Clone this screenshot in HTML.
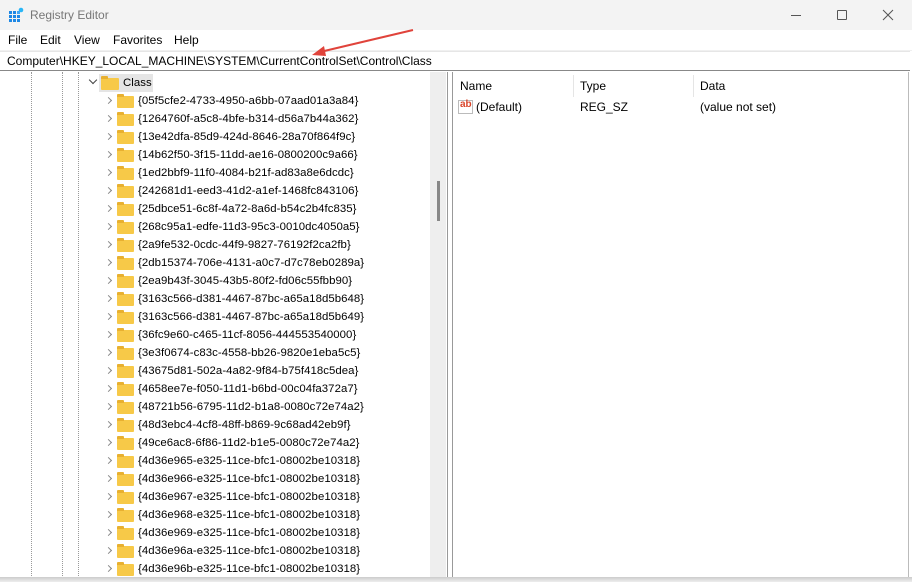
<!DOCTYPE html>
<html><head><meta charset="utf-8"><style>
*{margin:0;padding:0;box-sizing:border-box}
body{width:912px;height:582px;overflow:hidden;background:#fff;font-family:"Segoe UI","Liberation Sans",sans-serif;font-size:12px;color:#000;position:relative}
.abs{position:absolute}
.title{left:0;top:0;width:912px;height:30px;background:#f3f3f3}
.menu{left:0;top:30px;width:912px;height:20px;background:#fff}
.menu span{position:absolute;top:3px;font-size:12px}
.addr{left:0;top:51px;width:910px;height:20px;background:#fff;border-top:1px solid #e6e6e6;border-bottom:1px solid #888}
.tree{left:0;top:72px;width:430px;height:510px;background:#fff}
.row{position:absolute;height:18px;line-height:18px;left:0;width:430px}
.row .t{position:absolute;left:138px;top:0;font-size:11.4px;letter-spacing:0.05px}
.fold{position:absolute;left:117px;top:4px;width:17px;height:12px;background:#f7c948;border-radius:1px}
.fold:before{content:"";position:absolute;left:0;top:-2px;width:7px;height:3px;background:#e8b030;border-radius:1px 1px 0 0}
.chev{position:absolute;left:106px;top:6px;width:5px;height:5px;border-right:1.2px solid #888;border-top:1.2px solid #888;transform:rotate(45deg)}
.dot{position:absolute;top:72px;height:510px;width:0;border-left:1px dotted #999}
</style></head><body>
<div class="abs title">
<svg class="abs" style="left:8px;top:7px" width="16" height="16" viewBox="0 0 16 16">
<g fill="#1e88e5"><rect x="1" y="4" width="3" height="3"/><rect x="5" y="4" width="3" height="3"/><rect x="1" y="8" width="3" height="3"/><rect x="5" y="8" width="3" height="3"/><rect x="9" y="8" width="3" height="3"/><rect x="1" y="12" width="3" height="3"/><rect x="5" y="12" width="3" height="3"/><rect x="9" y="12" width="3" height="3"/><rect x="9" y="4" width="3" height="3" fill="#42a5f5"/></g>
<circle cx="13" cy="3" r="2.3" fill="#29b6f6"/></svg>
<span class="abs" style="left:30px;top:8px;color:#777;font-size:12px">Registry Editor</span>
<div class="abs" style="left:791px;top:15px;width:10px;height:1px;background:#555"></div>
<div class="abs" style="left:837px;top:10px;width:10px;height:10px;border:1px solid #555;border-radius:1px"></div>
<svg class="abs" style="left:882px;top:9px" width="12" height="12"><path d="M1 1L11 11M11 1L1 11" stroke="#555" stroke-width="1"/></svg>
</div>
<div class="abs menu"><span style="left:8px">File</span><span style="left:40px">Edit</span><span style="left:74px">View</span><span style="left:113px">Favorites</span><span style="left:174px">Help</span></div>
<div class="abs" style="left:0;top:50px;width:912px;height:1px;background:#f0f0f0"></div>
<div class="abs addr"><span class="abs" style="left:7px;top:2px;font-size:12px">Computer\HKEY_LOCAL_MACHINE\SYSTEM\CurrentControlSet\Control\Class</span></div>
<div class="abs tree"></div>
<div class="dot" style="left:31px"></div><div class="dot" style="left:62px"></div><div class="dot" style="left:78px"></div>
<div class="abs" style="left:430px;top:72px;width:16px;height:510px;background:#eeeeee"></div>
<div class="abs" style="left:437px;top:181px;width:3px;height:40px;background:#888"></div>
<div class="abs" style="left:447px;top:72px;width:1px;height:510px;background:#999"></div>
<div class="abs" style="left:452px;top:72px;width:1px;height:510px;background:#999"></div>
<div class="abs" style="left:908px;top:72px;width:1px;height:510px;background:#bbb"></div>
<div class="abs" style="left:0;top:577px;width:912px;height:5px;background:linear-gradient(#ccc,#eee)"></div>
<div id="rows"></div>
<div class="abs" style="left:453px;top:75px;width:455px;height:22px">
<span class="abs" style="left:7px;top:4px">Name</span>
<div class="abs" style="left:120px;top:0;width:1px;height:22px;background:#e5e5e5"></div>
<span class="abs" style="left:127px;top:4px">Type</span>
<div class="abs" style="left:240px;top:0;width:1px;height:22px;background:#e5e5e5"></div>
<span class="abs" style="left:247px;top:4px">Data</span>
</div>
<div class="abs" style="left:458px;top:100px;width:15px;height:14px;border:1px solid #bbb;background:#fff"><span class="abs" style="left:1px;top:-2px;color:#d9452b;font-weight:bold;font-size:10px">ab</span></div>
<span class="abs" style="left:476px;top:100px">(Default)</span>
<span class="abs" style="left:580px;top:100px">REG_SZ</span>
<span class="abs" style="left:700px;top:100px">(value not set)</span>
<svg class="abs" style="left:300px;top:25px" width="120" height="40"><path d="M113 5L20 27" stroke="#e0433b" stroke-width="2"/><path d="M12 30L24 21L26 31Z" fill="#e0433b"/></svg>
<script>
var ids=["{05f5cfe2-4733-4950-a6bb-07aad01a3a84}","{1264760f-a5c8-4bfe-b314-d56a7b44a362}","{13e42dfa-85d9-424d-8646-28a70f864f9c}","{14b62f50-3f15-11dd-ae16-0800200c9a66}","{1ed2bbf9-11f0-4084-b21f-ad83a8e6dcdc}","{242681d1-eed3-41d2-a1ef-1468fc843106}","{25dbce51-6c8f-4a72-8a6d-b54c2b4fc835}","{268c95a1-edfe-11d3-95c3-0010dc4050a5}","{2a9fe532-0cdc-44f9-9827-76192f2ca2fb}","{2db15374-706e-4131-a0c7-d7c78eb0289a}","{2ea9b43f-3045-43b5-80f2-fd06c55fbb90}","{3163c566-d381-4467-87bc-a65a18d5b648}","{3163c566-d381-4467-87bc-a65a18d5b649}","{36fc9e60-c465-11cf-8056-444553540000}","{3e3f0674-c83c-4558-bb26-9820e1eba5c5}","{43675d81-502a-4a82-9f84-b75f418c5dea}","{4658ee7e-f050-11d1-b6bd-00c04fa372a7}","{48721b56-6795-11d2-b1a8-0080c72e74a2}","{48d3ebc4-4cf8-48ff-b869-9c68ad42eb9f}","{49ce6ac8-6f86-11d2-b1e5-0080c72e74a2}","{4d36e965-e325-11ce-bfc1-08002be10318}","{4d36e966-e325-11ce-bfc1-08002be10318}","{4d36e967-e325-11ce-bfc1-08002be10318}","{4d36e968-e325-11ce-bfc1-08002be10318}","{4d36e969-e325-11ce-bfc1-08002be10318}","{4d36e96a-e325-11ce-bfc1-08002be10318}","{4d36e96b-e325-11ce-bfc1-08002be10318}"];
var h='<div class="row" style="top:74px"><div class="abs" style="left:99px;top:0;width:54px;height:18px;background:#e5e5e5"></div><div class="abs" style="left:90px;top:3px;width:6px;height:6px;border-right:1.3px solid #444;border-bottom:1.3px solid #444;transform:rotate(45deg)"></div><div class="fold" style="left:101px;width:18px"></div><span class="t" style="left:123px">Class</span></div>';
for(var i=0;i<ids.length;i++){h+='<div class="row" style="top:'+(92+i*18)+'px"><div class="chev"></div><div class="fold"></div><span class="t">'+ids[i]+'</span></div>';}
document.getElementById('rows').innerHTML=h;
</script>
</body></html>
